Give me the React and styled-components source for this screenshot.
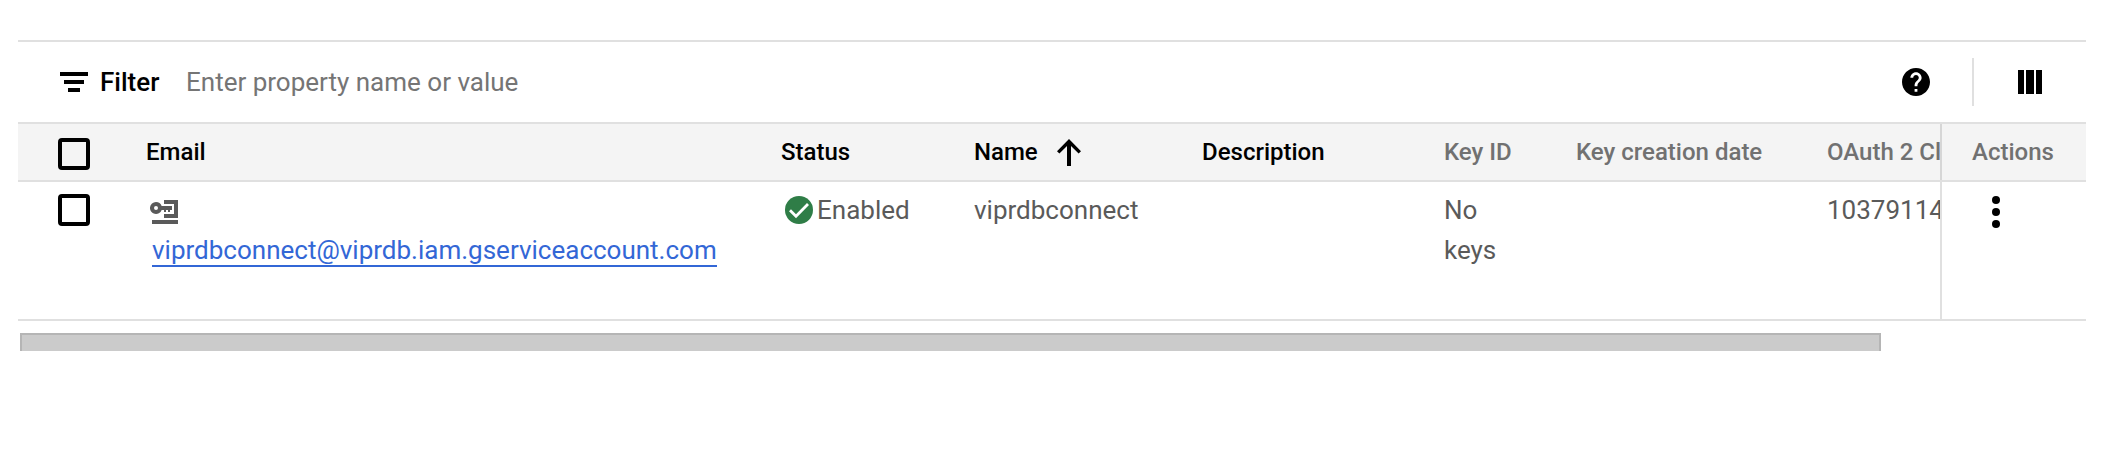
import React from "react";
import styled, { createGlobalStyle } from "styled-components";

const GlobalStyle = createGlobalStyle`
  * { box-sizing: border-box; }
  body {
    margin: 0;
    background: #fff;
    font-family: Roboto, "Liberation Sans", sans-serif;
    color: #000;
    overflow: hidden;
  }
`;

const Page = styled.main`
  width: 2126px;
  height: 474px;
  padding: 40px 40px 0 18px;
  background: #fff;
`;

const Toolbar = styled.div`
  display: flex;
  align-items: center;
  height: 84px;
  padding: 0 44px 0 42px;
  border-top: 2px solid #e0e0e0;
  border-bottom: 2px solid #e0e0e0;
`;

const FilterLabel = styled.span`
  margin-left: 12px;
  width: 86px;
  font-size: 26px;
  line-height: 40px;
  font-weight: 500;
`;

const FilterInput = styled.input`
  flex: 1;
  min-width: 0;
  padding: 0;
  border: 0;
  outline: 0;
  background: transparent;
  font: 400 26px/40px Roboto, "Liberation Sans", sans-serif;
  &::placeholder { color: #757575; opacity: 1; }
`;

const Divider = styled.span`
  width: 2px;
  height: 48px;
  margin: 0 44px 0 42px;
  background: #e0e0e0;
`;

const Icon = styled.svg`
  display: block;
  flex: none;
`;

const TableFrame = styled.div`
  display: grid;
  grid-template-columns: 1922px 146px;
`;

const Scroller = styled.div`
  overflow: hidden;
`;

const Pinned = styled.div`
  border-left: 2px solid ${(p) => (p.$head ? "#d6d6d6" : "#e0e0e0")};
  background: ${(p) => (p.$head ? "#f4f4f4" : "#fff")};
`;

const Columns = styled.div`
  display: grid;
  grid-template-columns: 128px 635px 193px 228px 242px 132px 251px 113px;
  width: 1922px;
`;

const Band = styled(TableFrame)`
  height: ${(p) => (p.$head ? 58 : 139)}px;
  border-bottom: 2px solid #e0e0e0;
  background: ${(p) => (p.$head ? "#f4f4f4" : "#fff")};
`;

const HeadCell = styled.div`
  display: flex;
  align-items: center;
  height: 56px;
  font-size: 24px;
  font-weight: 500;
  white-space: nowrap;
  color: ${(p) => (p.$muted ? "#717171" : "#000")};
  padding: 0 0 ${(p) => (p.$box ? 0 : 1)}px ${(p) => p.$indent || 0}px;
`;

const Cell = styled.div`
  padding: 8px 0 0 ${(p) => p.$indent || 0}px;
  font-size: 26px;
  line-height: 40px;
  color: #5a5a5a;
`;

const Checkbox = styled.span`
  display: block;
  width: 32px;
  height: 32px;
  margin-top: ${(p) => p.$top}px;
  border: 4px solid #000;
  border-radius: 4px;
`;

const KeyLine = styled.div`
  height: 40px;
  padding: 10px 0 0 4px;
`;

const EmailLink = styled.a`
  display: block;
  width: 565px;
  height: 37px;
  margin-left: 6px;
  border-bottom: 2px solid #3367d6;
  color: #3367d6;
  white-space: nowrap;
  text-decoration: none;
`;

const Status = styled.div`
  display: flex;
  align-items: center;
  gap: 4px;
`;

const MenuButton = styled.button`
  display: block;
  margin: 14px 0 0 50px;
  padding: 0;
  border: 0;
  background: none;
`;

const Scrollbar = styled.div`
  width: 1861px;
  height: 18px;
  margin: 12px 0 0 2px;
  border: 2px solid #b5b5b5;
  border-bottom: 0;
  background: #cbcbcb;
`;

const FilterIcon = () => (
  <Icon width="28" height="20" viewBox="0 0 28 20">
    <path d="M0 0h28v4H0zM4 8h20v4H4zM8 16h12v4H8z" />
  </Icon>
);

const HelpIcon = () => (
  <Icon width="28" height="28" viewBox="2 2 20 20">
    <path d="M12 2C6.48 2 2 6.48 2 12s4.48 10 10 10 10-4.48 10-10S17.52 2 12 2zm1 17h-2v-2h2v2zm2.07-7.75l-.9.92C13.45 12.9 13 13.5 13 15h-2v-.5c0-1.1.45-2.1 1.17-2.83l1.24-1.26c.37-.36.59-.86.59-1.41 0-1.1-.9-2-2-2s-2 .9-2 2H8c0-2.21 1.79-4 4-4s4 1.79 4 4c0 .88-.36 1.68-.93 2.25z" />
  </Icon>
);

const ColumnsIcon = () => (
  <Icon width="24" height="24" viewBox="0 0 24 24">
    <path d="M0 0h6v24H0zM8 0h8v24H8zM18 0h6v24h-6z" />
  </Icon>
);

const SortUpIcon = () => (
  <Icon width="24" height="28" viewBox="0 0 24 28">
    <path d="M12 0L24 12.2L21.6 14.6L14 6.9V27H10V6.9L2.4 14.6L0 12.2z" />
  </Icon>
);

const ServiceKeyIcon = () => (
  <Icon width="28" height="24" viewBox="0 0 28 24" fill="#5a5a5a">
    <path
      fillRule="evenodd"
      d="M6 2a6 6 0 0 1 5.65 4H22v4h-2v2h-2v-2h-2v2h-2v-2h-2.35A6 6 0 1 1 6 2zm0 4a2 2 0 1 0 0 4a2 2 0 0 0 0-4z"
    />
    <path d="M14 0h14v18H14v-4h10V4H14zM2 20h26v4H2z" />
  </Icon>
);

const EnabledIcon = () => (
  <Icon width="28" height="28" viewBox="0 0 28 28">
    <circle cx="14" cy="14" r="14" fill="#2f7d47" />
    <path d="M5 14.2l6 6L23 8" fill="none" stroke="#fff" strokeWidth="2.8" />
  </Icon>
);

const MoreIcon = () => (
  <Icon width="8" height="32" viewBox="0 0 8 32">
    <circle cx="4" cy="4" r="4" />
    <circle cx="4" cy="16" r="4" />
    <circle cx="4" cy="28" r="4" />
  </Icon>
);

const SortSlot = styled.span`
  margin: 2px 0 0 19px;
`;

export default function App() {
  return (
    <Page>
      <GlobalStyle />
      <Toolbar>
        <FilterIcon />
        <FilterLabel>Filter</FilterLabel>
        <FilterInput placeholder="Enter property name or value" />
        <HelpIcon />
        <Divider />
        <ColumnsIcon />
      </Toolbar>
      <Band $head>
        <Scroller>
          <Columns>
            <HeadCell $box $indent={40}>
              <Checkbox $top={4} />
            </HeadCell>
            <HeadCell>Email</HeadCell>
            <HeadCell>Status</HeadCell>
            <HeadCell>
              Name
              <SortSlot>
                <SortUpIcon />
              </SortSlot>
            </HeadCell>
            <HeadCell>Description</HeadCell>
            <HeadCell $muted>Key ID</HeadCell>
            <HeadCell $muted>Key creation date</HeadCell>
            <HeadCell $muted>OAuth 2 Cl</HeadCell>
          </Columns>
        </Scroller>
        <Pinned $head>
          <HeadCell $muted $indent={30}>Actions</HeadCell>
        </Pinned>
      </Band>
      <Band>
        <Scroller>
          <Columns>
            <Cell $indent={40}>
              <Checkbox $top={4} />
            </Cell>
            <Cell>
              <KeyLine>
                <ServiceKeyIcon />
              </KeyLine>
              <EmailLink>viprdbconnect@viprdb.iam.gserviceaccount.com</EmailLink>
            </Cell>
            <Cell $indent={4}>
              <Status>
                <EnabledIcon />
                Enabled
              </Status>
            </Cell>
            <Cell>viprdbconnect</Cell>
            <Cell />
            <Cell>
              No
              <br />
              keys
            </Cell>
            <Cell />
            <Cell>10379114</Cell>
          </Columns>
        </Scroller>
        <Pinned>
          <MenuButton aria-label="Actions">
            <MoreIcon />
          </MenuButton>
        </Pinned>
      </Band>
      <Scrollbar />
    </Page>
  );
}
